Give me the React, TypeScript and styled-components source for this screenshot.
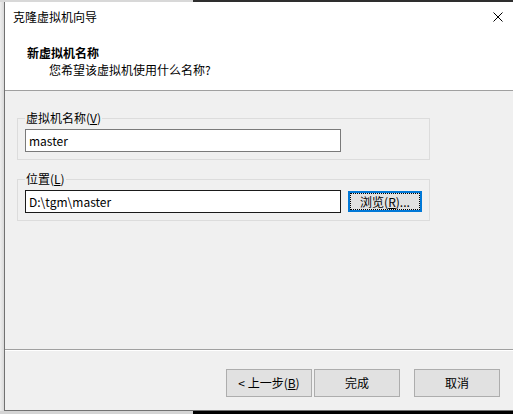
import React from 'react';
import styled, { createGlobalStyle } from 'styled-components';

const Global = createGlobalStyle`
  html, body { margin: 0; padding: 0; }
  body {
    width: 513px; height: 414px; overflow: hidden; background: #e6e6e6;
    font-family: "Noto Sans CJK SC", "Noto Sans", sans-serif;
    font-size: 12px; color: #000;
  }
`;

const Screen = styled.div`
  width: 513px; height: 414px; display: flex; flex-direction: column; overflow: hidden;
`;
const TopStrip = styled.div`
  height: 2px; flex: none;
  background: linear-gradient(to right, #d8d8d8 0 193px, #2e2e2e 193px);
`;
const Middle = styled.div`
  flex: 1; display: flex; min-height: 0;
`;
const Shadow = styled.div`
  width: 4px; flex: none; background: linear-gradient(to right, #eeeeee, #d9d9d9);
`;
const BottomStrip = styled.div`
  height: 3px; flex: none;
  background: linear-gradient(to right, #d4d4d4 0 193px, #000 193px);
`;
const Window = styled.div`
  flex: 1; min-width: 0; display: flex; flex-direction: column;
  border-left: 1px solid #717171; border-bottom: 1px solid #717171;
  background: #f0f0f0;
`;
const TitleBar = styled.div`
  height: 30px; flex: none; background: #fff;
  display: flex; align-items: center; justify-content: space-between;
  padding: 0 10px 0 8px; line-height: 16px;
`;
const Header = styled.div`
  height: 59px; flex: none; background: #fff; box-sizing: border-box;
  padding: 12px 0 0 22px; border-bottom: 1px solid #a0a0a0;
  line-height: 17px;
`;
const HeaderTitle = styled.div`
  font-weight: bold;
`;
const HeaderSub = styled.div`
  margin-left: 22px;
`;
const Body = styled.div`
  flex: 1; padding: 20px 0 0 12px; display: flex; flex-direction: column; gap: 12px;
`;
const Group = styled.fieldset`
  margin: 0; width: 413px; box-sizing: border-box;
  border: 1px solid #dcdcdc; padding: 4px 7px 7px 7px;
`;
const Legend = styled.legend`
  padding: 0 1px; line-height: 14px;
`;
const Key = styled.span`
  text-decoration: underline;
`;
const Row = styled.div`
  display: flex; align-items: center; gap: 7px;
`;
const TextBox = styled.input<{ $dark?: boolean }>`
  width: 316px; height: 23px; box-sizing: border-box; margin: 0;
  border: 1px solid ${p => (p.$dark ? '#1a1a1a' : '#7a7a7a')};
  background: #fff; padding: 0 3px; font: inherit; color: #000; outline: none;
`;
const Button = styled.button<{ $w?: number; $h?: number; $focused?: boolean }>`
  width: ${p => p.$w ?? 86}px; height: ${p => p.$h ?? 28}px; box-sizing: border-box;
  margin: 0; padding: 0; font: inherit; color: #000; background: #e1e1e1;
  border: ${p => (p.$focused ? '2px solid #0078d7' : '1px solid #adadad')};
  outline: ${p => (p.$focused ? '1px dotted #000' : 'none')};
  outline-offset: -3px; line-height: 16px;
`;
const Footer = styled.div`
  height: 61px; flex: none; box-sizing: border-box;
  border-top: 1px solid #a0a0a0; box-shadow: inset 0 1px 0 #fff;
  padding: 19px 13px 0 0; display: flex; justify-content: flex-end; align-items: flex-start;
`;
const ButtonPair = styled.div`
  display: flex; gap: 2px; margin-right: 14px;
`;

const CloseIcon = () => (
  <svg width="10" height="10" viewBox="0 0 10 10" shapeRendering="crispEdges">
    <path d="M0.5 0.5 L9.5 9.5 M9.5 0.5 L0.5 9.5" stroke="#000" strokeWidth="1" shapeRendering="geometricPrecision" />
  </svg>
);

export default function App() {
  return (
    <>
      <Global />
      <Screen>
        <TopStrip />
        <Middle>
          <Shadow />
          <Window>
            <TitleBar>
              <span>克隆虚拟机向导</span>
              <CloseIcon />
            </TitleBar>
            <Header>
              <HeaderTitle>新虚拟机名称</HeaderTitle>
              <HeaderSub>您希望该虚拟机使用什么名称?</HeaderSub>
            </Header>
            <Body>
              <Group>
                <Legend>虚拟机名称(<Key>V</Key>)</Legend>
                <Row>
                  <TextBox defaultValue="master" readOnly />
                </Row>
              </Group>
              <Group>
                <Legend>位置(<Key>L</Key>)</Legend>
                <Row>
                  <TextBox $dark defaultValue="D:\tgm\master" readOnly />
                  <Button $w={74} $h={21} $focused>浏览(<Key>R</Key>)...</Button>
                </Row>
              </Group>
            </Body>
            <Footer>
              <ButtonPair>
                <Button>&lt; 上一步(<Key>B</Key>)</Button>
                <Button>完成</Button>
              </ButtonPair>
              <Button>取消</Button>
            </Footer>
          </Window>
        </Middle>
        <BottomStrip />
      </Screen>
    </>
  );
}
